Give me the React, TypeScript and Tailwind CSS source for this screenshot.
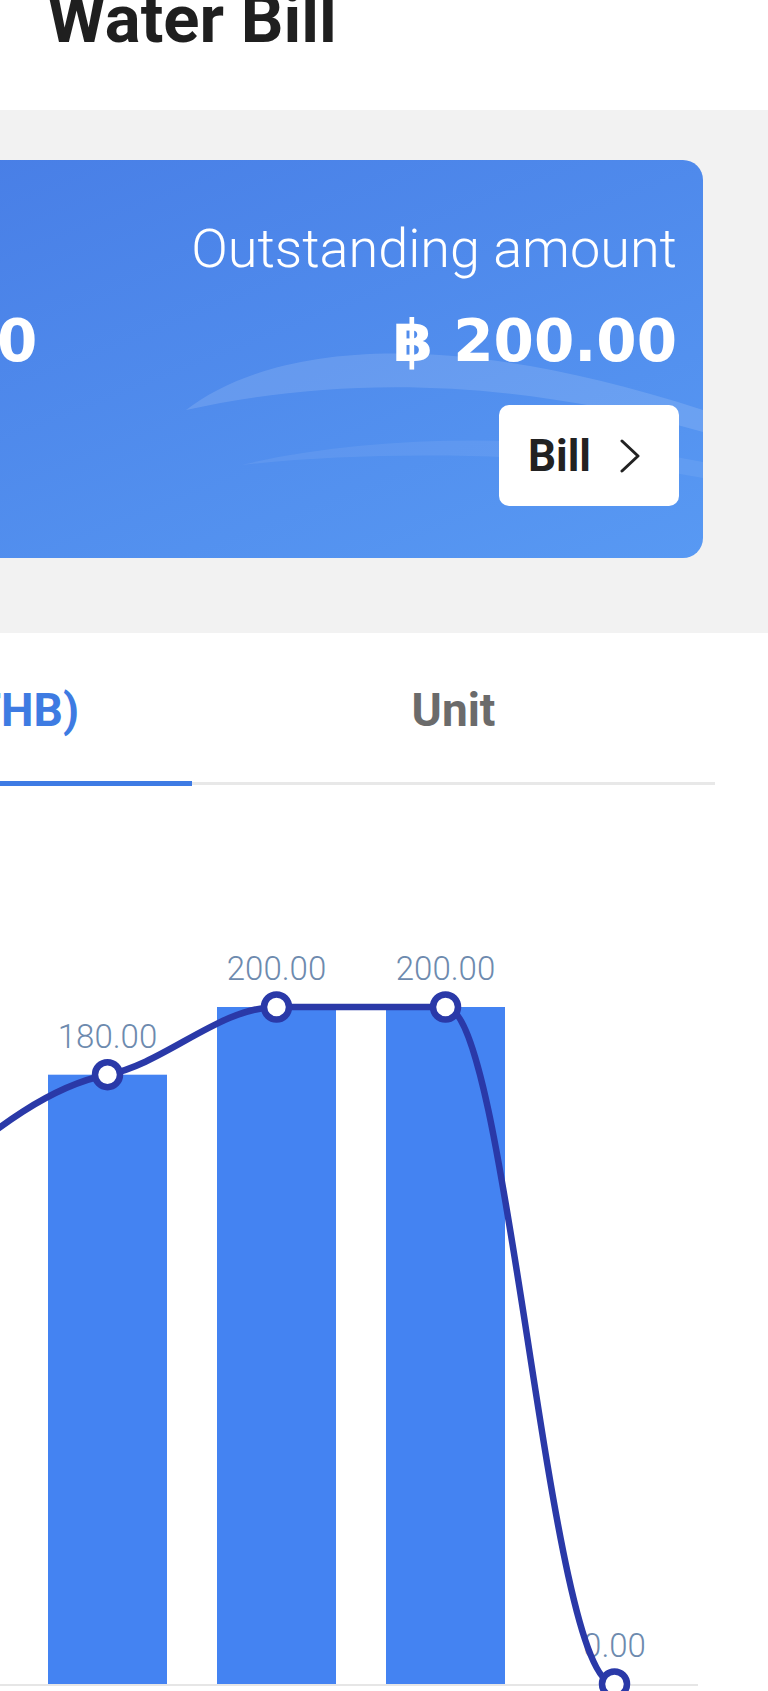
import { ReactNode } from "react";

// Monthly water bill, THB. Only the last four months fit on screen.
const months = [120, 150, 180, 200, 200, 0];
const BAND = 169;
const FIRST_X = -230.5;
const BASE_Y = 1684;
const SCALE = 677 / 200;

const cx = (i: number) => FIRST_X + BAND * i;
const cy = (v: number) => BASE_Y - v * SCALE;

// smoothed trend line, control points tuned by hand
const trend =
  "M -230.5 1278 C -174 1250, -118 1200, -61.5 1176 " +
  "C -5 1128, 51 1085.5, 107.5 1074.7 " +
  "C 164 1064, 220 1007, 276.5 1007 " +
  "L 445.5 1007 " +
  "C 508 1007, 548 1684, 614.5 1684";

function Tab({ label, active }: { label: string; active?: boolean }) {
  return (
    <div className="flex-1 flex flex-col items-center">
      <span
        className={
          "font-['Roboto'] font-bold text-[46px] leading-none " +
          (active ? "text-[#3e7be2]" : "text-[#6b6b6b]")
        }
      >
        {label}
      </span>
      {active ? (
        <div className="mt-[48px] h-[5px] w-full bg-[#3e7be4]" />
      ) : (
        <div className="mt-[49px] h-[3px] w-full bg-[#e8e8e8]" />
      )}
    </div>
  );
}

function Column({ children }: { children: ReactNode }) {
  return <div className="flex flex-col">{children}</div>;
}

export default function App() {
  return (
    <div className="w-[768px] h-[1691px] overflow-hidden bg-white">
      <div className="w-[1152px] -ml-[384px]">
        {/* header */}
        <div className="h-[110px] flex justify-center">
          <h1 className="-mt-[14px] font-['Roboto'] font-bold text-[67px] leading-none text-[#1f1f1f]">
            Water Bill
          </h1>
        </div>

        {/* summary card */}
        <div className="bg-[#f2f2f2] pt-[50px] pb-[75px] px-[65px]">
          <div className="relative overflow-hidden h-[398px] rounded-[20px] bg-linear-to-br from-[#467ae4] to-[#5899f3] flex justify-between">
            <svg className="absolute inset-0" width="1022" height="398" viewBox="0 0 1022 398">
              <path
                d="M 505 250 C 590 185, 760 165, 1022 250 L 1022 272 C 820 215, 650 218, 505 250 Z"
                fill="#ffffff"
                fillOpacity="0.13"
              />
              <path
                d="M 560 305 C 700 272, 880 274, 1022 302 L 1022 318 C 880 292, 700 290, 560 305 Z"
                fill="#ffffff"
                fillOpacity="0.07"
              />
            </svg>

            <div className="relative pl-[72px] pt-[62px]">
              <Column>
                <span className="font-['Roboto'] font-light text-[54px] leading-none text-white">Paid</span>
                <span className="mt-[36px] font-['DejaVu_Sans'] font-bold text-[58px] leading-none text-white">
                  ฿ 180.00
                </span>
              </Column>
            </div>

            <div className="relative pr-[26px] pt-[62px] flex flex-col items-end">
              <span className="font-['Roboto'] font-light text-[54px] leading-none text-white">
                Outstanding amount
              </span>
              <span className="mt-[36px] font-['DejaVu_Sans'] font-bold text-[58px] leading-none text-white">
                ฿ 200.00
              </span>
              <button className="mt-[35px] -mr-[2px] w-[180px] h-[101px] rounded-[10px] bg-white flex items-center pl-[29px] gap-[28px]">
                <span className="font-['Roboto'] font-bold text-[44px] leading-none text-[#222222]">Bill</span>
                <svg width="22" height="34" viewBox="0 0 22 34">
                  <polyline
                    points="3,2 19,17 3,32"
                    fill="none"
                    stroke="#222222"
                    strokeWidth="3"
                    strokeLinecap="round"
                    strokeLinejoin="round"
                  />
                </svg>
              </button>
            </div>
          </div>
        </div>

        {/* tabs */}
        <div className="pt-[54px] px-[53px] flex">
          <Tab label="Amount (THB)" active />
          <Tab label="Unit" />
        </div>

        {/* chart */}
        <svg width="1152" height="974" viewBox="-384 786 1152 974" className="block">
          <line x1="-314" y1="1685" x2="698" y2="1685" stroke="#e6e6e6" strokeWidth="2" />
          {months.map((v, i) => (
            <rect key={"b" + i} x={cx(i) - 59.5} y={cy(v)} width="119" height={v * SCALE} fill="#4483f2" />
          ))}
          {months.map((v, i) => (
            <text
              key={"t" + i}
              x={cx(i)}
              y={cy(v) - 27}
              textAnchor="middle"
              fontFamily="Roboto, sans-serif"
              fontWeight="300"
              fontSize="33"
              fill="#6d8aae"
            >
              {v.toFixed(2)}
            </text>
          ))}
          <path d={trend} fill="none" stroke="#2a39a8" strokeWidth="6.5" strokeLinecap="round" />
          {months.map((v, i) => (
            <circle key={"c" + i} cx={cx(i)} cy={cy(v)} r="12.5" fill="#ffffff" stroke="#2a39a8" strokeWidth="6.5" />
          ))}
        </svg>
      </div>
    </div>
  );
}
